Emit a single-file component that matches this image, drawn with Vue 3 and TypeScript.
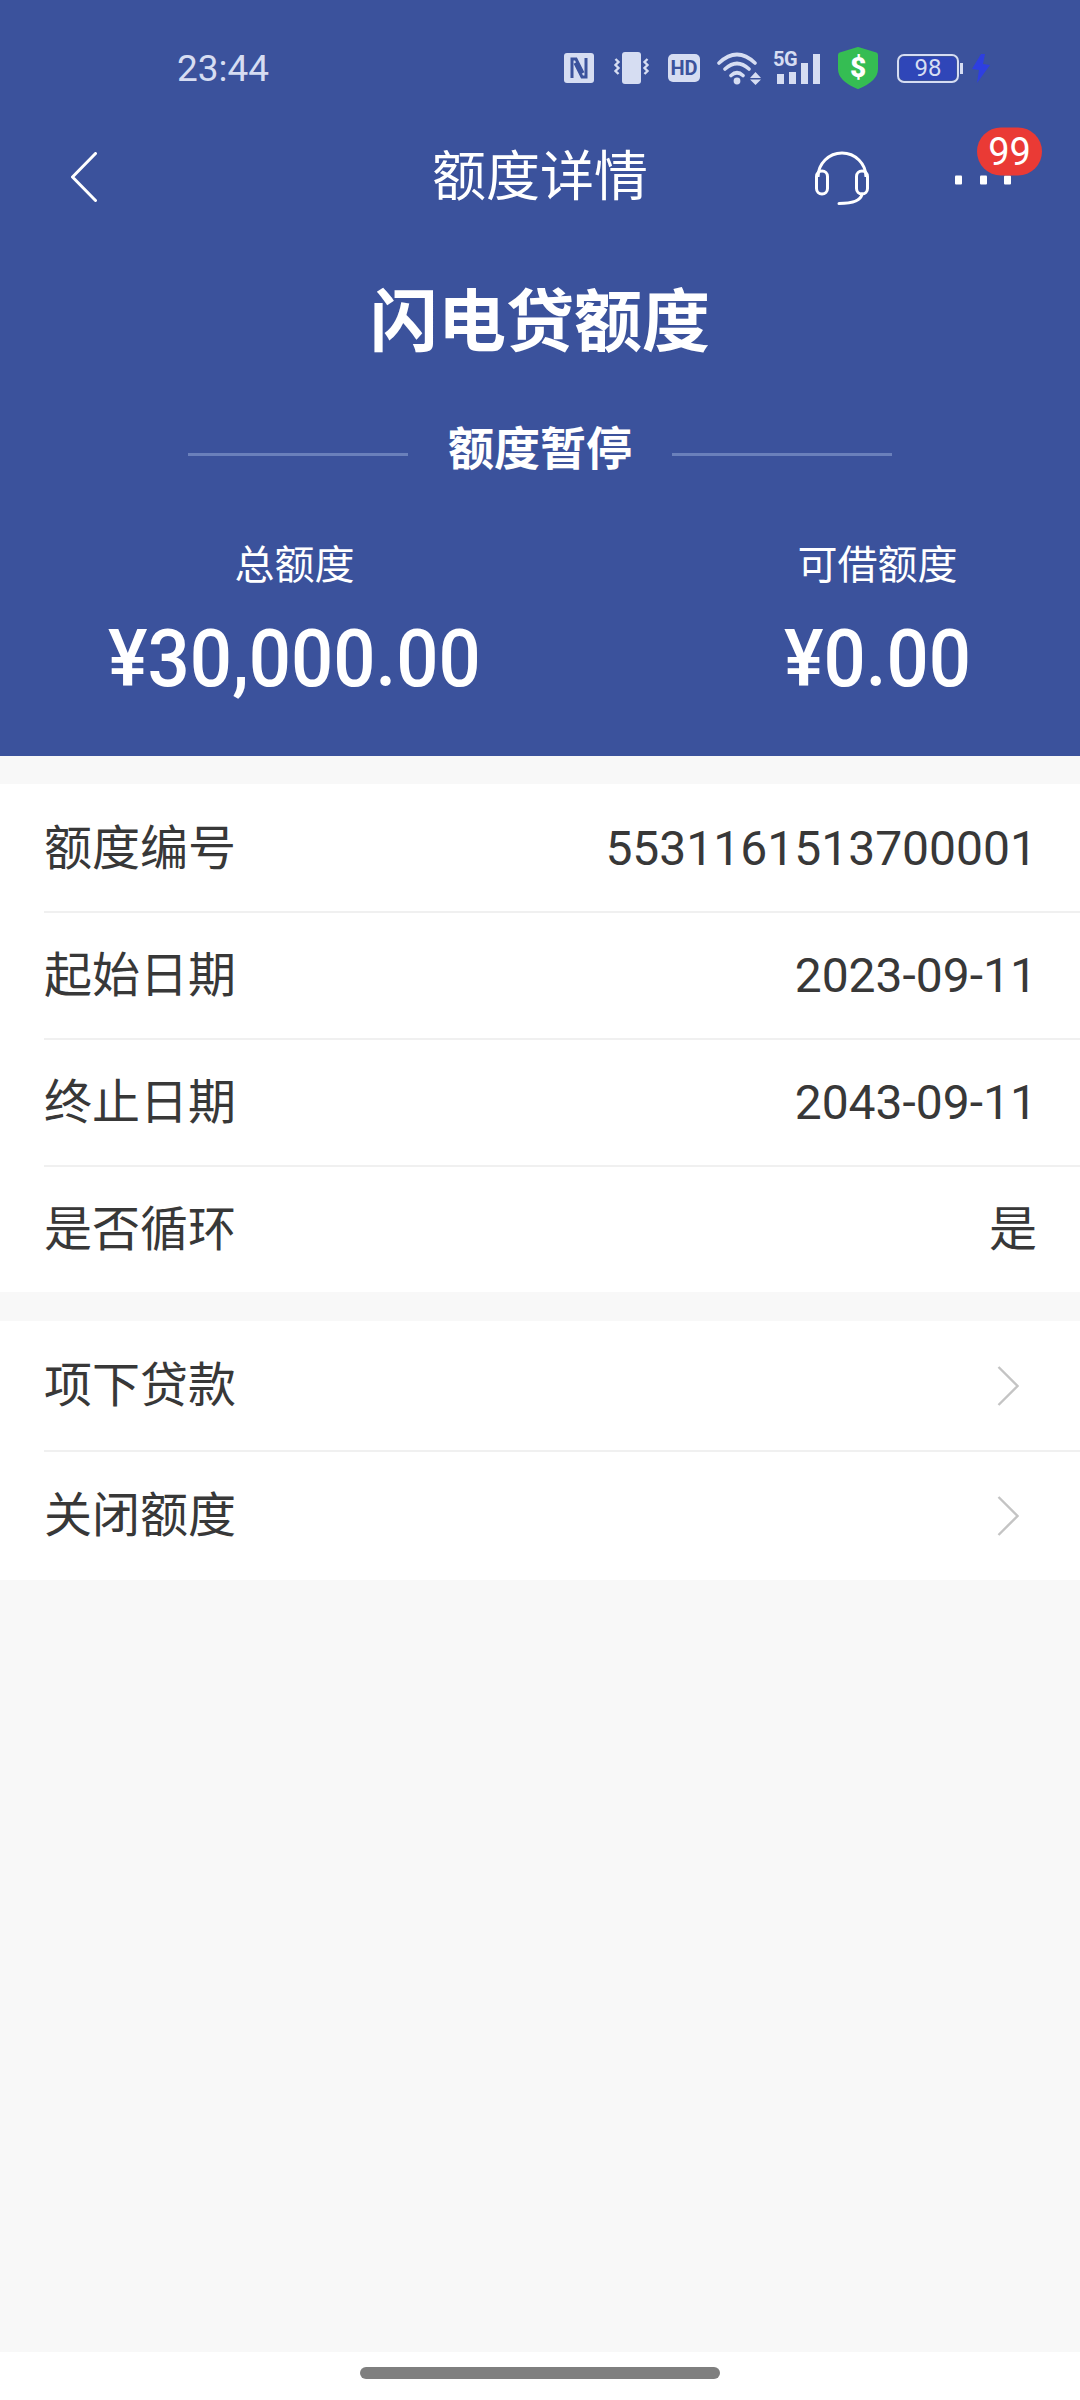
<script setup lang="ts">
const infoRows = [
  { label: '额度编号', value: '5531161513700001' },
  { label: '起始日期', value: '2023-09-11' },
  { label: '终止日期', value: '2043-09-11' },
  { label: '是否循环', value: '是' }
]

const actions = ['项下贷款', '关闭额度']
</script>

<template>
  <div class="page">
    <header class="hero">
      <div class="status-bar">
        <span class="status-bar__time">23:44</span>
        <div class="status-bar__icons">
          <svg class="ic-nfc" viewBox="0 0 30 30">
            <rect width="30" height="30" rx="3" fill="#d6ddf2" />
            <path d="M8 25V6h4l7 14M22 5v19h-4l-7-14" fill="none" stroke="#3b529c" stroke-width="3" />
          </svg>
          <svg class="ic-vibrate" viewBox="0 0 37 32">
            <rect x="9" width="19" height="32" rx="3" fill="#d6ddf2" />
            <path d="M2.500 7l3 3-3 3 3 3-3 3 3 3M34.500 7l-3 3 3 3-3 3 3 3-3 3" fill="none" stroke="#d6ddf2" stroke-width="2.400" />
          </svg>
          <div class="ic-hd">HD</div>
          <svg class="ic-wifi" viewBox="0 0 44 33">
            <path d="M2 11Q20 -6 38 11M8 17Q20 6 32 17M14 23.500Q20 18 26 23.500" fill="none" stroke="#d6ddf2" stroke-width="3.600" stroke-linecap="round" />
            <circle cx="20" cy="29" r="3.400" fill="#d6ddf2" />
            <path d="M33 26l5.500-6 5.500 6zM33 27.500h11L38.500 33z" fill="#d6ddf2" />
          </svg>
          <div class="ic-signal">
            <span class="ic-signal__label">5G</span>
            <span class="ic-signal__bar ic-signal__bar--1"></span>
            <span class="ic-signal__bar ic-signal__bar--2"></span>
            <span class="ic-signal__bar ic-signal__bar--3"></span>
            <span class="ic-signal__bar ic-signal__bar--4"></span>
          </div>
          <svg class="ic-shield" viewBox="0 0 40 42">
            <path d="M20 1L38 6.500Q39 7 39 8V22C39 31 30 37 20 41C10 37 1 31 1 22V8Q1 7 2 6.500z" fill="#35bd53" stroke="#35bd53" stroke-width="2" stroke-linejoin="round" />
            <text x="20" y="30" text-anchor="middle" class="ic-shield__text">$</text>
          </svg>
          <div class="ic-battery">
            <div class="ic-battery__body">98</div>
            <span class="ic-battery__tip"></span>
          </div>
          <svg class="ic-bolt" viewBox="0 0 18 29">
            <path d="M9 0L0 15l7 1-2 13 13-18-7-1 2-10z" fill="#2e3fe0" />
          </svg>
        </div>
      </div>

      <nav class="nav">
        <div class="nav__side">
          <svg class="nav__back" viewBox="0 0 26 50">
            <path d="M24.500 1.500L1.500 25l23 23.500" fill="none" stroke="#fff" stroke-width="3" stroke-linecap="round" stroke-linejoin="round" />
          </svg>
        </div>
        <h1 class="nav__title">额度详情</h1>
        <div class="nav__side nav__side--right">
          <svg class="nav__headset" viewBox="0 0 54 54">
            <path d="M3 26A24 24 0 0 1 51 26" fill="none" stroke="#fff" stroke-width="3" />
            <rect x="1.500" y="20" width="11" height="23" rx="5.500" fill="none" stroke="#fff" stroke-width="3" />
            <rect x="41.500" y="20" width="11" height="23" rx="5.500" fill="none" stroke="#fff" stroke-width="3" />
            <path d="M47 43c-1 6-9 9.500-23 9.500" fill="none" stroke="#fff" stroke-width="3" stroke-linecap="round" />
          </svg>
          <div class="nav__more">
            <span class="nav__dot"></span>
            <span class="nav__dot"></span>
            <span class="nav__dot"></span>
            <span class="nav__badge">99</span>
          </div>
        </div>
      </nav>

      <h2 class="hero__title">闪电贷额度</h2>

      <div class="hero__status">
        <span class="hero__line"></span>
        <span class="hero__status-text">额度暂停</span>
        <span class="hero__line"></span>
      </div>

      <div class="stats">
        <div class="stats__item">
          <div class="stats__label">总额度</div>
          <div class="stats__amount">¥30,000.00</div>
        </div>
        <div class="stats__item">
          <div class="stats__label">可借额度</div>
          <div class="stats__amount">¥0.00</div>
        </div>
      </div>
    </header>

    <section class="card card--info">
      <div v-for="row in infoRows" :key="row.label" class="row row--info">
        <span class="row__label">{{ row.label }}</span>
        <span class="row__value">{{ row.value }}</span>
      </div>
    </section>

    <section class="card card--actions">
      <div v-for="item in actions" :key="item" class="row row--action">
        <span class="row__label">{{ item }}</span>
        <svg class="row__chevron" viewBox="0 0 22 40">
          <path d="M1.500 1l19 19-19 19" fill="none" stroke="#c4c4c4" stroke-width="2.400" />
        </svg>
      </div>
    </section>

    <div class="spacer"></div>

    <footer class="home-bar">
      <span class="home-bar__pill"></span>
    </footer>
  </div>
</template>

<style>
html,
body {
  margin: 0;
  background: #f8f8f8;
}
</style>

<style scoped>
.page {
  display: flex;
  flex-direction: column;
  min-height: 2400px;
  background: #f8f8f8;
  font-family: Roboto, "Noto Sans CJK SC", sans-serif;
  color: #333;
}

.hero {
  height: 756px;
  overflow: hidden;
  background: #3b529c;
  color: #fff;
}

.status-bar {
  display: flex;
  align-items: center;
  justify-content: space-between;
  height: 48px;
  padding: 45px 90px 0 177px;
}

.status-bar__time {
  font-size: 37px;
  line-height: 48px;
  color: #d6ddf2;
}

.status-bar__icons {
  display: flex;
  align-items: center;
  transform: translateY(-1px);
}

.ic-nfc {
  width: 30px;
  height: 30px;
}

.ic-vibrate {
  width: 37px;
  height: 32px;
  margin-left: 19px;
}

.ic-hd {
  width: 32px;
  height: 28px;
  margin-left: 18px;
  border-radius: 5px;
  background: #d6ddf2;
  color: #3b529c;
  font-size: 20px;
  font-weight: 700;
  line-height: 28px;
  text-align: center;
}

.ic-wifi {
  width: 44px;
  height: 33px;
  margin-left: 17px;
}

.ic-signal {
  display: flex;
  align-items: flex-end;
  justify-content: flex-end;
  gap: 5px;
  position: relative;
  width: 47px;
  height: 31px;
  margin-left: 12px;
}

.ic-signal__label {
  position: absolute;
  top: -3px;
  left: 0;
  font-size: 20px;
  font-weight: 700;
  line-height: 18px;
  letter-spacing: -0.5px;
  color: #d6ddf2;
}

.ic-signal__bar {
  width: 7px;
  background: #d6ddf2;
}

.ic-signal__bar--1 {
  height: 10px;
}

.ic-signal__bar--2 {
  height: 12px;
}

.ic-signal__bar--3 {
  height: 21px;
}

.ic-signal__bar--4 {
  height: 30px;
}

.ic-shield {
  width: 40px;
  height: 42px;
  margin-left: 18px;
}

.ic-shield__text {
  font-family: Roboto, sans-serif;
  font-size: 28px;
  font-weight: 900;
  fill: #fff;
}

.ic-battery {
  display: flex;
  align-items: center;
  margin-left: 19px;
}

.ic-battery__body {
  width: 56px;
  height: 23px;
  border: 2px solid #d6ddf2;
  border-radius: 7px;
  background: #2f46b8;
  background-clip: content-box;
  padding: 1px;
  font-size: 24px;
  line-height: 23px;
  text-align: center;
  color: #d6ddf2;
}

.ic-battery__tip {
  width: 3px;
  height: 11px;
  margin-left: 1px;
  background: #d6ddf2;
}

.ic-bolt {
  width: 18px;
  height: 29px;
  margin-left: 9px;
}

.nav {
  display: grid;
  grid-template-columns: 1fr auto 1fr;
  align-items: center;
  height: 100px;
  margin-top: 34px;
  padding: 0 37px;
}

.nav__side {
  display: flex;
  align-items: center;
}

.nav__side--right {
  justify-content: flex-end;
}

.nav__back {
  width: 26px;
  height: 50px;
  margin-left: 34px;
}

.nav__title {
  margin: 0;
  font-size: 54px;
  font-weight: 400;
  line-height: 70px;
  transform: translateY(1px);
}

.nav__headset {
  width: 54px;
  height: 54px;
  margin-right: 86px;
  transform: translateY(1px);
}

.nav__more {
  display: flex;
  gap: 17.500px;
  position: relative;
  width: 56px;
  margin-right: 32px;
  transform: translateY(2.500px);
}

.nav__dot {
  width: 7px;
  height: 9px;
  border-radius: 1px;
  background: #fff;
}

.nav__badge {
  position: absolute;
  top: -48px;
  left: 22px;
  width: 65px;
  height: 48px;
  border-radius: 24px;
  background: #ea3a35;
  font-size: 38px;
  line-height: 48px;
  text-align: center;
}

.hero__title {
  margin: 52px 0 0;
  font-size: 68px;
  font-weight: 700;
  line-height: 88px;
  text-align: center;
}

.hero__status {
  display: flex;
  align-items: center;
  justify-content: center;
  margin-top: 52px;
  height: 60px;
}

.hero__status-text {
  width: 264px;
  font-size: 46px;
  font-weight: 700;
  line-height: 60px;
  text-align: center;
}

.hero__line {
  width: 220px;
  height: 3px;
  margin-top: 10px;
  background: #6a80bb;
}

.stats {
  display: flex;
  justify-content: space-between;
  margin-top: 61px;
  padding: 0 102px 0 94px;
}

.stats__item {
  text-align: center;
}

.stats__label {
  font-size: 40px;
  line-height: 52px;
}

.stats__amount {
  margin-top: 22px;
  font-size: 80px;
  font-weight: 500;
  line-height: 90px;
  transform: scaleX(0.93);
}

.card {
  margin-top: 28px;
  background: #fff;
}

.card--info {
  padding-top: 2px;
}

.card--actions {
  margin-top: 29px;
}

.row {
  display: flex;
  align-items: center;
  justify-content: space-between;
  margin-left: 44px;
  border-bottom: 2px solid #f0f0f0;
  box-sizing: border-box;
}

.row:last-child {
  border-bottom: none;
}

.row--info {
  height: 127px;
  padding-right: 43px;
}

.row--info:last-child {
  height: 125px;
}

.row--action {
  height: 131px;
  padding-right: 61px;
}

.row--action:last-child {
  height: 128px;
}

.row__label,
.row__value {
  font-size: 48px;
  line-height: 62px;
  color: #383838;
}

.row__chevron {
  width: 22px;
  height: 40px;
}

.spacer {
  flex: 1;
}

.home-bar {
  display: flex;
  justify-content: center;
  height: 48px;
  padding-top: 15px;
  box-sizing: border-box;
  background: #fff;
}

.home-bar__pill {
  width: 360px;
  height: 12px;
  border-radius: 6px;
  background: #7f7f7f;
}
</style>
